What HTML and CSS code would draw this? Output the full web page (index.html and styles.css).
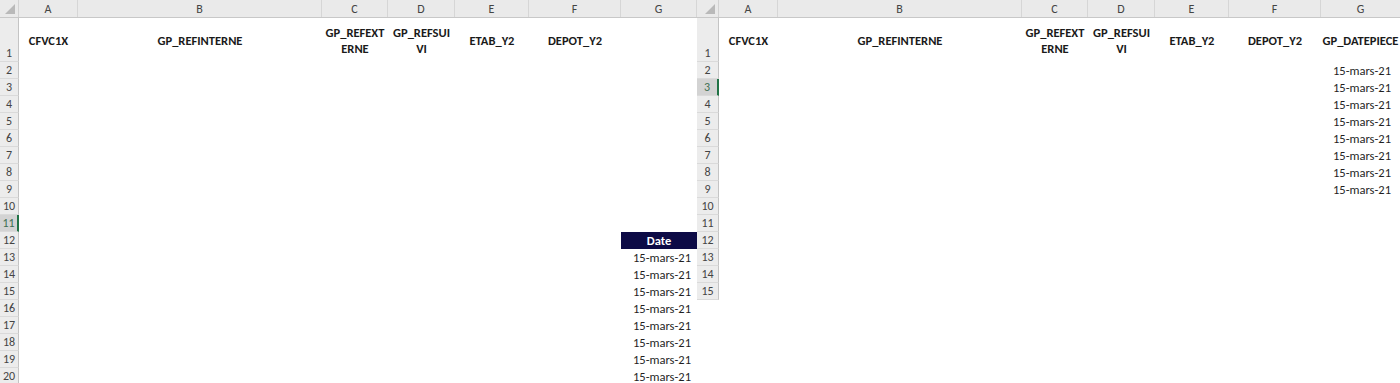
FILE: index.html
```html
<!DOCTYPE html>
<html lang="fr">
<head>
<meta charset="utf-8">
<title>Excel panes</title>
<link rel="stylesheet" href="styles.css">
</head>
<body>
<div class="screen">
  <!-- LEFT PANE -->
  <div class="pane pane-left">
    <div class="row colhead">
      <div class="corner"><svg width="10" height="10" viewBox="0 0 10 10"><polygon points="10,0 10,10 0,10" fill="#b9b9b9"/></svg></div>
      <div class="ch">A</div><div class="ch">B</div><div class="ch">C</div><div class="ch">D</div><div class="ch">E</div><div class="ch">F</div><div class="ch">G</div>
    </div>
    <div class="row r1">
      <div class="rh">1</div>
      <div class="hd">CFVC1X</div>
      <div class="hd">GP_REFINTERNE</div>
      <div class="hd">GP_REFEXT<br>ERNE</div>
      <div class="hd">GP_REFSUI<br>VI</div>
      <div class="hd">ETAB_Y2</div>
      <div class="hd">DEPOT_Y2</div>
      <div class="hd"></div>
    </div>
    <div class="row"><div class="rh">2</div></div>
    <div class="row"><div class="rh">3</div></div>
    <div class="row"><div class="rh">4</div></div>
    <div class="row"><div class="rh">5</div></div>
    <div class="row"><div class="rh">6</div></div>
    <div class="row"><div class="rh">7</div></div>
    <div class="row"><div class="rh">8</div></div>
    <div class="row"><div class="rh">9</div></div>
    <div class="row"><div class="rh">10</div></div>
    <div class="row"><div class="rh sel">11</div></div>
    <div class="row"><div class="rh">12</div><div class="cell col-g date-head">Date</div></div>
    <div class="row"><div class="rh">13</div><div class="cell col-g num">15-mars-21</div></div>
    <div class="row"><div class="rh">14</div><div class="cell col-g num">15-mars-21</div></div>
    <div class="row"><div class="rh">15</div><div class="cell col-g num">15-mars-21</div></div>
    <div class="row"><div class="rh">16</div><div class="cell col-g num">15-mars-21</div></div>
    <div class="row"><div class="rh">17</div><div class="cell col-g num">15-mars-21</div></div>
    <div class="row"><div class="rh">18</div><div class="cell col-g num">15-mars-21</div></div>
    <div class="row"><div class="rh">19</div><div class="cell col-g num">15-mars-21</div></div>
    <div class="row"><div class="rh">20</div><div class="cell col-g num">15-mars-21</div></div>
  </div>

  <!-- RIGHT PANE -->
  <div class="pane pane-right">
    <div class="row colhead">
      <div class="corner"><svg width="10" height="10" viewBox="0 0 10 10"><polygon points="10,0 10,10 0,10" fill="#b9b9b9"/></svg></div>
      <div class="ch">A</div><div class="ch">B</div><div class="ch">C</div><div class="ch">D</div><div class="ch">E</div><div class="ch">F</div><div class="ch">G</div>
    </div>
    <div class="row r1">
      <div class="rh">1</div>
      <div class="hd">CFVC1X</div>
      <div class="hd">GP_REFINTERNE</div>
      <div class="hd">GP_REFEXT<br>ERNE</div>
      <div class="hd">GP_REFSUI<br>VI</div>
      <div class="hd">ETAB_Y2</div>
      <div class="hd">DEPOT_Y2</div>
      <div class="hd">GP_DATEPIECE</div>
    </div>
    <div class="row"><div class="rh">2</div><div class="cell col-g num">15-mars-21</div></div>
    <div class="row"><div class="rh sel">3</div><div class="cell col-g num">15-mars-21</div></div>
    <div class="row"><div class="rh">4</div><div class="cell col-g num">15-mars-21</div></div>
    <div class="row"><div class="rh">5</div><div class="cell col-g num">15-mars-21</div></div>
    <div class="row"><div class="rh">6</div><div class="cell col-g num">15-mars-21</div></div>
    <div class="row"><div class="rh">7</div><div class="cell col-g num">15-mars-21</div></div>
    <div class="row"><div class="rh">8</div><div class="cell col-g num">15-mars-21</div></div>
    <div class="row"><div class="rh">9</div><div class="cell col-g num">15-mars-21</div></div>
    <div class="row"><div class="rh">10</div></div>
    <div class="row"><div class="rh">11</div></div>
    <div class="row"><div class="rh">12</div></div>
    <div class="row"><div class="rh">13</div></div>
    <div class="row"><div class="rh">14</div></div>
    <div class="row"><div class="rh">15</div></div>
  </div>
</div>
</body>
</html>
```

FILE: styles.css
```css
* { box-sizing: border-box; }
html, body {
  margin: 0;
  padding: 0;
  background: #ffffff;
}
body {
  font-family: Calibri, Carlito, Lato, "Liberation Sans", sans-serif;
  font-size: 12.5px;
  color: #1f1f1f;
  width: 1400px;
  height: 383px;
  overflow: hidden;
}
.screen {
  display: flex;
  align-items: flex-start;
  width: 1400px;
  height: 383px;
}
.pane { display: flex; flex-direction: column; }
.pane-left { width: 697px; flex: none; }
.pane-right { flex: 1; min-width: 0; }

.row {
  display: grid;
  height: 17px;
}
.pane-left .row { grid-template-columns: 19px 59px 244px 66px 67px 74px 92px 76px; }
.pane-right .row { grid-template-columns: 22px 59px 244px 66px 67px 74px 92px 1fr; }

.colhead {
  height: 18px;
  background: #eaeaea;
  border-bottom: 1px solid #c8c8c8;
}
.corner {
  display: flex;
  align-items: flex-end;
  justify-content: flex-end;
  padding: 0 3px 3px 0;
  border-right: 1px solid #d2d2d2;
}
.ch {
  display: flex;
  align-items: center;
  justify-content: center;
  color: #444;
  font-size: 12px;
  border-right: 1px solid #d6d6d6;
}
.pane-right .ch:last-child { border-right: none; }

.r1 { height: 44px; }

.rh {
  grid-column: 1;
  background: #ececec;
  border-right: 1px solid #c4c4c4;
  border-bottom: 1px solid #dadada;
  color: #444;
  display: flex;
  align-items: flex-end;
  justify-content: center;
  line-height: 16px;
  font-size: 12px;
}
.rh.sel {
  background: #d3d3d3;
  color: #3e6f52;
  border-right: 2px solid #217346;
}

.hd {
  display: flex;
  align-items: center;
  justify-content: center;
  text-align: center;
  font-weight: 700;
  color: #1a1a1a;
  line-height: 16px;
  white-space: nowrap;
  padding-top: 1px;
}

.cell {
  display: flex;
  align-items: center;
  line-height: 17px;
  white-space: nowrap;
}
.col-g { grid-column: 8; }
.num {
  justify-content: flex-end;
  padding-right: 6px;
}
.pane-right .num { padding-right: 9px; }
.date-head {
  background: #0c0a45;
  color: #ffffff;
  font-weight: 700;
  justify-content: center;
}
```
